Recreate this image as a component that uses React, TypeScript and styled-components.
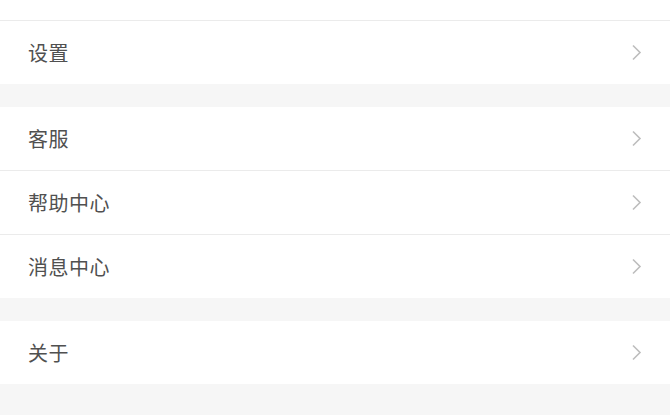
import styled, { createGlobalStyle } from "styled-components";

const GlobalStyle = createGlobalStyle`
  html, body {
    margin: 0;
    padding: 0;
    background-color: #f6f6f6;
    overflow: hidden;
  }
  body {
    font-family: "Noto Sans CJK SC", "Noto Sans", sans-serif;
  }
`;

const Page = styled.div`
  width: 670px;
  height: 415px;
  overflow: hidden;
  background-color: #f6f6f6;
`;

// list is scrolled: the first row is partly above the window
const Scroller = styled.div`
  margin-top: -43px;
  display: flex;
  flex-direction: column;
  gap: 23px;
`;

const Group = styled.ul`
  list-style: none;
  margin: 0;
  padding: 0;
  background-color: #fff;
`;

const Row = styled.li`
  height: 63px;
  padding: 0 27px 0 28px;
  display: flex;
  align-items: center;
  justify-content: space-between;
  & + & {
    border-top: 1px solid #ebebeb;
  }
  span {
    font-size: 20px;
    color: #505050;
    letter-spacing: 0.5px;
  }
`;

const Chevron = () => (
  <svg width="12" height="17" viewBox="0 0 12 17">
    <path d="M2 1.5 L9 8.5 L2 15.5" fill="none" stroke="#bdbdbd" strokeWidth="1.6" />
  </svg>
);

const groups = [
  ["其他设置", "设置"],
  ["客服", "帮助中心", "消息中心"],
  ["关于"],
];

function App() {
  return (
    <Page>
      <GlobalStyle />
      <Scroller>
        {groups.map((items, i) => (
          <Group key={i}>
            {items.map((name) => (
              <Row key={name}>
                <span>{name}</span>
                <Chevron />
              </Row>
            ))}
          </Group>
        ))}
      </Scroller>
    </Page>
  );
}

export default App;
